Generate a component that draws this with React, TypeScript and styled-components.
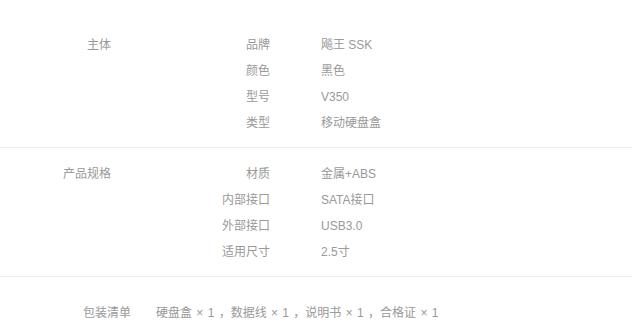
import React from "react";
import styled, { createGlobalStyle } from "styled-components";

const GlobalStyle = createGlobalStyle`
  body {
    margin: 0;
    background: #fff;
    font-family: "Liberation Sans", "Noto Sans CJK SC", sans-serif;
    font-size: 12px;
    color: #999;
  }
`;

const SpecTable = styled.div`
  width: 632px;
  padding-top: 18px;
`;

const Section = styled.div<{ $pad: string; $divider?: boolean }>`
  display: flex;
  align-items: flex-start;
  padding: ${(p) => p.$pad};
  border-bottom: ${(p) => (p.$divider ? "1px solid #eee" : "none")};
`;

const GroupTitle = styled.div<{ $width: number }>`
  width: ${(p) => p.$width}px;
  flex-shrink: 0;
  text-align: right;
  line-height: 26px;
`;

const Rows = styled.div`
  display: flex;
  flex-direction: column;
`;

const Row = styled.div`
  display: flex;
  height: 26px;
  line-height: 26px;
`;

const Label = styled.div`
  width: 159px;
  text-align: right;
`;

const Value = styled.div`
  margin-left: 51px;
  white-space: nowrap;
`;

const PackingList = styled.div`
  margin-left: 25px;
  line-height: 26px;
  white-space: nowrap;
  word-spacing: 1px;
`;

const groups = [
  {
    title: "主体",
    pad: "14px 0 11px",
    rows: [
      ["品牌", "飚王 SSK"],
      ["颜色", "黑色"],
      ["型号", "V350"],
      ["类型", "移动硬盘盒"],
    ],
  },
  {
    title: "产品规格",
    pad: "13px 0 11px",
    rows: [
      ["材质", "金属+ABS"],
      ["内部接口", "SATA接口"],
      ["外部接口", "USB3.0"],
      ["适用尺寸", "2.5寸"],
    ],
  },
];

export default function App() {
  return (
    <>
      <GlobalStyle />
      <SpecTable>
        {groups.map((g) => (
          <Section key={g.title} $pad={g.pad} $divider>
            <GroupTitle $width={111}>{g.title}</GroupTitle>
            <Rows>
              {g.rows.map(([k, v]) => (
                <Row key={k}>
                  <Label>{k}</Label>
                  <Value>{v}</Value>
                </Row>
              ))}
            </Rows>
          </Section>
        ))}
        <Section $pad="23px 0 0">
          <GroupTitle $width={131}>包装清单</GroupTitle>
          <PackingList>
            硬盘盒 × 1 ，数据线 × 1 ，说明书 × 1 ，合格证 × 1
          </PackingList>
        </Section>
      </SpecTable>
    </>
  );
}
